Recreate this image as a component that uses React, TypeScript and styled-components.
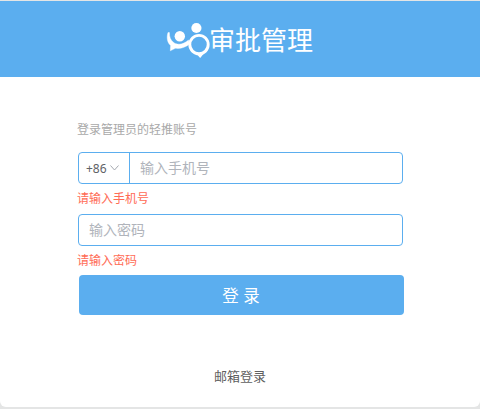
import React from 'react';
import styled, { createGlobalStyle } from 'styled-components';

const BLUE = '#5baeef';

const GlobalStyle = createGlobalStyle`
  * { box-sizing: border-box; }
  body {
    margin: 0;
    background: #e4e5e5;
    font-family: "Liberation Sans", "Noto Sans CJK SC", sans-serif;
  }
`;

const Page = styled.main`
  height: 409px;
  padding: 1px 0 2px;
  overflow: hidden;
`;

const Card = styled.section`
  height: 406px;
  background: #fff;
  border-radius: 0 0 6px 6px;
  overflow: hidden;
`;

const Header = styled.header`
  height: 76px;
  display: flex;
  align-items: flex-start;
  padding: 19px 0 0 166px;
  background: ${BLUE};
`;

const Logo = styled.svg`
  flex: none;
  width: 43px;
  height: 40px;
  overflow: visible;
`;

const Title = styled.h1`
  margin: 0;
  color: #fff;
  font-size: 26px;
  font-weight: 400;
  line-height: 42px;
`;

const Form = styled.form`
  display: flex;
  flex-direction: column;
  width: 326px;
  margin: 43px 0 0 78px;
`;

const Caption = styled.p`
  margin: 0 0 0 -1px;
  color: #a9a9a9;
  font-size: 12px;
  line-height: 20px;
  height: 32px;
`;

const Field = styled.div`
  display: flex;
  flex: none;
  width: 325px;
  height: 32px;
  border: 1px solid ${BLUE};
  border-radius: 4px;
  overflow: hidden;
`;

const AreaCode = styled.button`
  display: flex;
  flex: none;
  align-items: center;
  gap: 2px;
  width: 51px;
  padding: 0 0 0 7px;
  border: 0;
  border-right: 1px solid ${BLUE};
  background: none;
  color: #606266;
  font: 12px "Noto Sans", sans-serif;
`;

const Input = styled.input`
  flex: 1;
  min-width: 0;
  padding: 0 10px;
  border: 0;
  outline: 0;
  background: none;
  color: #555;
  font-family: inherit;
  font-size: 14px;
  &::placeholder { color: #b0b4bb; opacity: 1; }
`;

const ErrorText = styled.p`
  height: 30px;
  margin: 0 0 0 -1px;
  padding-top: 6px;
  color: #ff6b55;
  font-size: 12px;
  line-height: 18px;
`;

const Submit = styled.button`
  flex: none;
  width: 325px;
  height: 40px;
  margin: -1px 0 0 1px;
  padding: 0 1px 1px 0;
  border: 0;
  border-radius: 4px;
  background: ${BLUE};
  color: #fff;
  font-family: inherit;
  font-size: 16.5px;
`;

const MailLogin = styled.a`
  display: block;
  margin-top: 52px;
  text-align: center;
  color: #606060;
  font-size: 13px;
  line-height: 20px;
`;

function BrandLogo() {
  return (
    <Logo viewBox="0 0 43 40" aria-hidden="true">
      <circle cx="13.8" cy="16.2" r="5.2" fill="#fff" />
      <circle cx="30.4" cy="8" r="5.1" fill="#fff" />
      <path
        d="M2 12.5C.4 17.5 1.2 22.5 4.6 25.5L4.3 30.8L9.3 28.3C14.5 29 19.5 27.3 23.5 24L22.5 20C18 24.2 12 25.5 8 22.8C4.6 20.5 3.3 17 3.4 12.5Z"
        fill="#fff"
        stroke="#fff"
        strokeWidth=".4"
        strokeLinejoin="round"
      />
      <circle cx="33" cy="24.6" r="9.2" fill="none" stroke="#fff" strokeWidth="2.9" />
      <path d="M30.5 34L34.2 38L38.5 32.8Z" fill="#fff" />
    </Logo>
  );
}

export default function App() {
  return (
    <>
      <GlobalStyle />
      <Page>
        <Card>
          <Header>
            <BrandLogo />
            <Title>审批管理</Title>
          </Header>
          <Form onSubmit={(e) => e.preventDefault()}>
            <Caption>登录管理员的轻推账号</Caption>
            <Field>
              <AreaCode type="button">
                +86
                <svg width="11" height="8" viewBox="0 0 11 8" fill="none" stroke="#a5a9b0">
                  <path d="M1.5 1.5L5.5 6L9.5 1.5" />
                </svg>
              </AreaCode>
              <Input type="tel" placeholder="输入手机号" />
            </Field>
            <ErrorText>请输入手机号</ErrorText>
            <Field>
              <Input type="password" placeholder="输入密码" />
            </Field>
            <ErrorText>请输入密码</ErrorText>
            <Submit type="submit">登 录</Submit>
          </Form>
          <MailLogin>邮箱登录</MailLogin>
        </Card>
      </Page>
    </>
  );
}
